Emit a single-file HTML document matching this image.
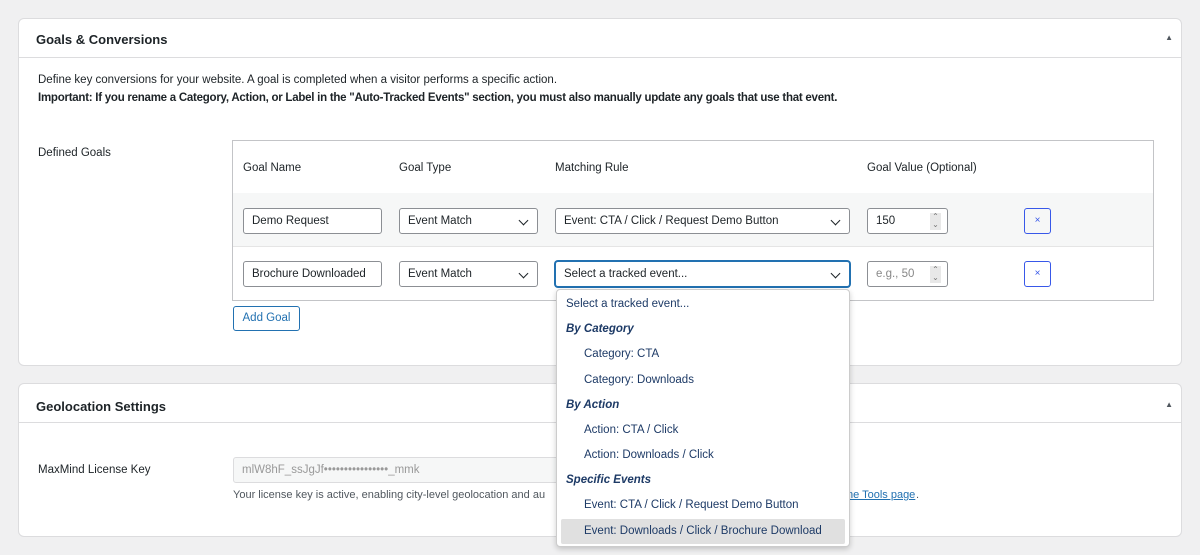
<!DOCTYPE html><html><head><style>
*{box-sizing:border-box;margin:0;padding:0}
body{width:1200px;height:555px;background:#f0f0f1;font-family:"Liberation Sans",sans-serif;font-size:11.5px;color:#1d2327;position:relative;overflow:hidden}
.a{position:absolute}
.panel{position:absolute;left:18px;width:1164px;background:#fff;border:1px solid #dcdcde;border-radius:6px}
.hd{position:absolute;left:0;right:0;top:0;border-bottom:1px solid #dcdcde}
.hd b{position:absolute;left:17px;font-size:13px}
.tri{position:absolute;right:8px;font-size:8px;color:#50575e}
.in{position:absolute;height:26px;border:1px solid #8c8f94;border-radius:3px;background:#fff;padding:0 8px;line-height:25px;white-space:nowrap}
.sel:after{content:"";position:absolute;right:10px;top:8px;width:6px;height:6px;border-right:1.5px solid #1d2327;border-bottom:1.5px solid #1d2327;transform:rotate(45deg)}
.spin{position:absolute;right:6px;top:4px;width:11px;height:17px;background:#e8e8e8;font-size:8px;line-height:8px;text-align:center;color:#777}
.x{position:absolute;width:27px;height:26px;border:1px solid #3858e9;border-radius:3px;color:#3858e9;text-align:center;line-height:24px;font-size:10px}
.dd{position:absolute;left:556px;top:289px;width:294px;height:258px;background:#fff;border:1px solid #ccc;border-radius:4px;box-shadow:0 2px 6px rgba(0,0,0,.2);color:#1d3a66}
.dd div{position:absolute;left:0;right:0;white-space:nowrap}
.g{font-weight:bold;font-style:italic;padding-left:9px}
.i{padding-left:27px}
</style></head><body>
<div class="panel" style="top:18px;height:348px">
 <div class="hd" style="height:39px"><b style="top:13px">Goals &amp; Conversions</b><span class="tri" style="top:14px">▲</span></div>
 <div class="a" style="left:19px;top:55px">Define key conversions for your website. A goal is completed when a visitor performs a specific action.</div>
 <div class="a" style="left:19px;top:73px;font-weight:bold;letter-spacing:-0.25px">Important: If you rename a Category, Action, or Label in the "Auto-Tracked Events" section, you must also manually update any goals that use that event.</div>
 <div class="a" style="left:19px;top:128px">Defined Goals</div>
</div>
<div class="a" style="left:232px;top:140px;width:922px;height:161px;border:1px solid #c3c4c7;background:#fff">
 <div class="a" style="left:0;right:0;top:52px;height:54px;background:#f6f7f7;border-bottom:1px solid #e5e5e5"></div>
 <div class="a" style="left:10px;top:21px">Goal Name</div>
 <div class="a" style="left:166px;top:21px">Goal Type</div>
 <div class="a" style="left:322px;top:21px">Matching Rule</div>
 <div class="a" style="left:634px;top:21px">Goal Value (Optional)</div>
</div>
<div class="in" style="left:243px;top:208px;width:139px">Demo Request</div>
<div class="in sel" style="left:399px;top:208px;width:139px">Event Match</div>
<div class="in sel" style="left:555px;top:208px;width:295px">Event: CTA / Click / Request Demo Button</div>
<div class="in" style="left:867px;top:208px;width:81px">150<span class="spin">⌃<br>⌄</span></div>
<div class="x" style="left:1024px;top:208px">×</div>
<div class="in" style="left:243px;top:261px;width:139px">Brochure Downloaded</div>
<div class="in sel" style="left:399px;top:261px;width:139px">Event Match</div>
<div class="in sel" style="left:555px;top:261px;width:295px;border-color:#2271b1;box-shadow:0 0 0 1px #2271b1">Select a tracked event...</div>
<div class="in" style="left:867px;top:261px;width:81px;color:#888">e.g., 50<span class="spin">⌃<br>⌄</span></div>
<div class="x" style="left:1024px;top:261px">×</div>
<div class="a" style="left:233px;top:306px;width:67px;height:25px;border:1px solid #2271b1;border-radius:3px;color:#2271b1;text-align:center;line-height:23px;background:#fff">Add Goal</div>
<div class="panel" style="top:383px;height:154px">
 <div class="hd" style="height:39px"><b style="top:15px">Geolocation Settings</b><span class="tri" style="top:16px">▲</span></div>
 <div class="a" style="left:19px;top:80px">MaxMind License Key</div>
 <div class="a" style="left:214px;top:73px;width:330px;height:26px;border:1px solid #dcdcde;border-radius:3px;background:#f6f7f7;color:#999;padding-left:8px;line-height:24px">mlW8hF_ssJgJf••••••••••••••••_mmk</div>
 <div class="a" style="left:214px;top:105px;font-size:11px;color:#50575e">Your license key is active, enabling city-level geolocation and au</div>
 <div class="a" style="left:828px;top:105px;font-size:11px;color:#2271b1;text-decoration:underline">ne Tools page</div><div class="a" style="left:897px;top:105px;font-size:11px;color:#50575e">.</div>
</div>
<div class="dd">
 <div style="top:8px;padding-left:9px">Select a tracked event...</div>
 <div class="g" style="top:33px">By Category</div>
 <div class="i" style="top:58px">Category: CTA</div>
 <div class="i" style="top:84px">Category: Downloads</div>
 <div class="g" style="top:109px">By Action</div>
 <div class="i" style="top:134px">Action: CTA / Click</div>
 <div class="i" style="top:159px">Action: Downloads / Click</div>
 <div class="g" style="top:184px">Specific Events</div>
 <div class="i" style="top:209px">Event: CTA / Click / Request Demo Button</div>
 <div style="top:229px;left:4px;right:4px;height:25px;background:#e0e0e0;border-radius:2px"></div>
 <div class="i" style="top:235px">Event: Downloads / Click / Brochure Download</div>
</div>
</body></html>
